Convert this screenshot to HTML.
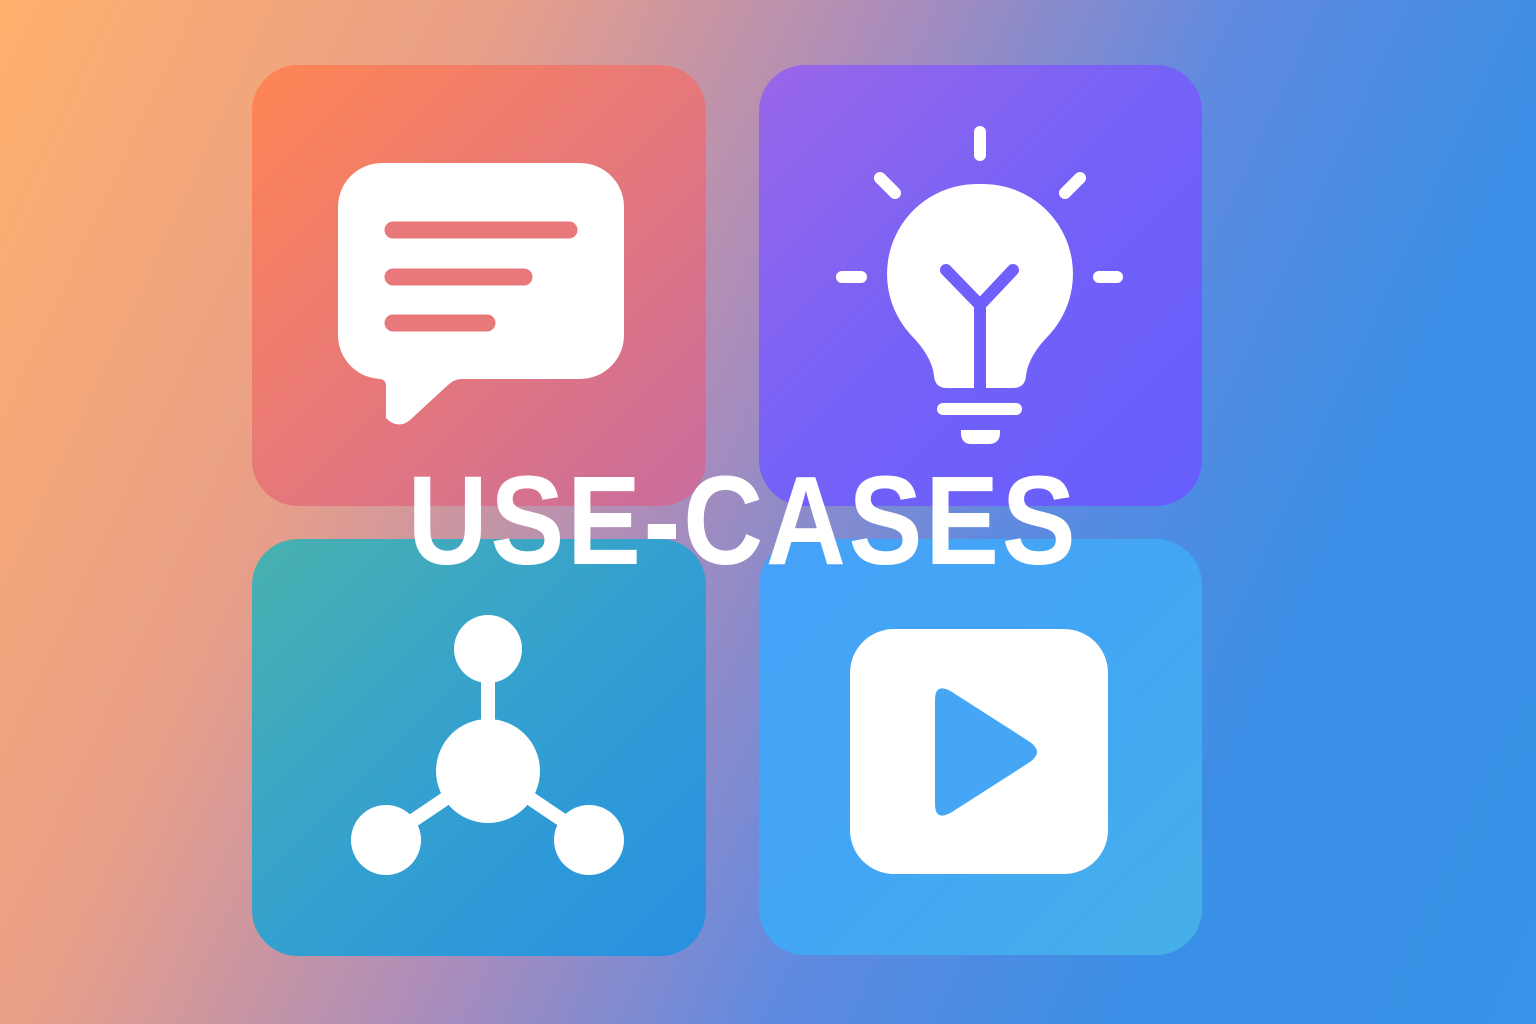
<!DOCTYPE html>
<html><head><meta charset="utf-8"><style>
html,body{margin:0;padding:0}
body{width:1536px;height:1024px;overflow:hidden;position:relative;
background:linear-gradient(115deg,#feb06c 0%,#e99f88 25%,#a98cbc 45%,#5f8ae0 62%,#3a8fe6 80%,#3a93e8 100%);}
.t{position:absolute;border-radius:46px}
.title{position:absolute;left:0;width:1486px;top:448px;text-align:center;font:bold 126px "Liberation Sans",sans-serif;color:#fff;transform:scaleX(0.88);transform-origin:743px 0;letter-spacing:3px}
svg{position:absolute;left:0;top:0}
</style></head><body>
<div class="t" style="left:252px;top:65px;width:454px;height:441px;background:linear-gradient(135deg,#fe8553,#e7787a 50%,#c96c9e)"></div>
<div class="t" style="left:759px;top:65px;width:443px;height:441px;background:linear-gradient(135deg,#9a67e8,#7461f8 50%,#665dfd)"></div>
<div class="t" style="left:252px;top:539px;width:454px;height:417px;background:linear-gradient(135deg,#49b1ae,#33a0d0 50%,#2790e3)"></div>
<div class="t" style="left:759px;top:539px;width:443px;height:416px;background:linear-gradient(135deg,#46a2f8,#43a6f4 50%,#46b0e8)"></div>
<svg width="1536" height="1024" viewBox="0 0 1536 1024">
<path d="M385 163 H580 A44 44 0 0 1 624 207 V335 A44 44 0 0 1 580 379 H462 Q454 379 448 385 L410 420 Q398 430 386 418 V386 Q386 379 379 379 H382 A44 44 0 0 1 338 335 V207 A44 44 0 0 1 382 163 Z" fill="#fff"/>
<g stroke="#e8787a" stroke-width="17" stroke-linecap="round"><line x1="393" y1="230" x2="569" y2="230"/><line x1="393" y1="277" x2="524" y2="277"/><line x1="393" y1="323" x2="487" y2="323"/></g>
<g stroke="#fff" stroke-width="12" stroke-linecap="round" fill="none">
<line x1="980" y1="132" x2="980" y2="155"/><line x1="880" y1="178" x2="895" y2="193"/><line x1="1080" y1="178" x2="1065" y2="193"/>
<line x1="842" y1="277" x2="861" y2="277"/><line x1="1099" y1="277" x2="1117" y2="277"/>
<line x1="943" y1="409" x2="1016" y2="409"/></g>
<path d="M980 184 A90 90 0 0 1 1050 334 Q1028 356 1026 376 Q1025 388 1013 388 H947 Q935 388 934 376 Q932 356 910 334 A90 90 0 0 1 980 184Z" fill="#fff"/>
<path d="M961 430 H1000 Q1001 443 990 444 H970 Q960 443 961 430Z" fill="#fff"/>
<g stroke="#6f5ffb" stroke-width="12" stroke-linecap="round" fill="none"><path d="M946 270 L980 305 L1013 270"/><line x1="980" y1="305" x2="980" y2="392"/></g>
<g stroke="#fff" stroke-width="14"><line x1="488" y1="650" x2="488" y2="770"/><line x1="488" y1="770" x2="387" y2="838"/><line x1="488" y1="770" x2="589" y2="838"/></g>
<g fill="#fff"><circle cx="488" cy="649" r="34"/><circle cx="488" cy="771" r="52"/><circle cx="386" cy="840" r="35"/><circle cx="589" cy="840" r="35"/></g>
<rect x="850" y="629" width="258" height="245" rx="44" fill="#fff"/>
<path d="M935 700 Q935 682 952 692 L1030 742 Q1044 752 1030 762 L952 812 Q935 822 935 804Z" fill="#44a6f5"/>
</svg>
<div class="title">USE-CASES</div>
</body></html>
